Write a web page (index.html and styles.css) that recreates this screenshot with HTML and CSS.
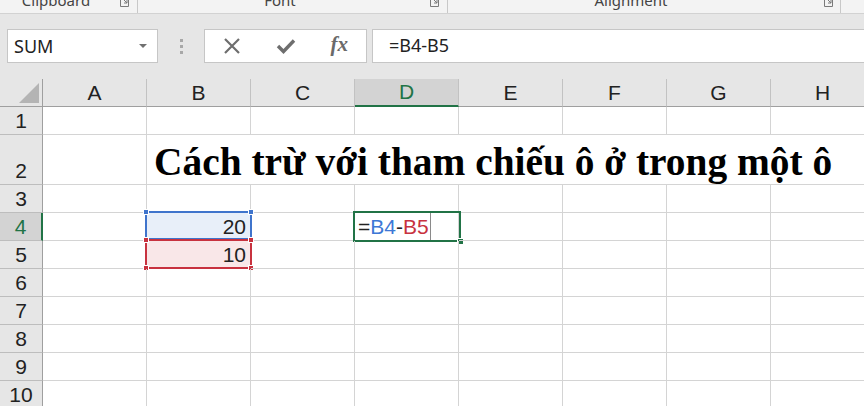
FILE: index.html
```html
<!DOCTYPE html>
<html lang="vi">
<head>
<meta charset="utf-8">
<title>Excel</title>
<link rel="stylesheet" href="styles.css">
</head>
<body>
<div class="ribbon">
  <div class="rgroup g1">
    <span class="rlabel">Clipboard</span>
    <span class="launch"><svg width="9" height="9" viewBox="0 0 9 9"><path d="M0.5 0 V8.5 H8.5 V0" fill="none" stroke="#7a7a7a" stroke-width="1"/><path d="M2 0 L7 5 M7 2 V5 H4" fill="none" stroke="#7a7a7a" stroke-width="1"/></svg></span>
  </div>
  <div class="rgroup g2">
    <span class="rlabel">Font</span>
    <span class="launch"><svg width="9" height="9" viewBox="0 0 9 9"><path d="M0.5 0 V8.5 H8.5 V0" fill="none" stroke="#7a7a7a" stroke-width="1"/><path d="M2 0 L7 5 M7 2 V5 H4" fill="none" stroke="#7a7a7a" stroke-width="1"/></svg></span>
  </div>
  <div class="rgroup g3">
    <span class="rlabel">Alignment</span>
    <span class="launch"><svg width="9" height="9" viewBox="0 0 9 9"><path d="M0.5 0 V8.5 H8.5 V0" fill="none" stroke="#7a7a7a" stroke-width="1"/><path d="M2 0 L7 5 M7 2 V5 H4" fill="none" stroke="#7a7a7a" stroke-width="1"/></svg></span>
  </div>
</div>

<div class="fbar">
  <div class="namebox">
    <span class="nbtext">SUM</span>
    <span class="dd"></span>
  </div>
  <div class="grip"><i></i><i></i><i></i></div>
  <div class="fbtns">
    <span class="fbtn"><svg width="18" height="18" viewBox="0 0 18 18"><path d="M2 2 L16 16 M16 2 L2 16" stroke="#6e6e6e" stroke-width="2.2" fill="none"/></svg></span>
    <span class="fbtn"><svg width="20" height="18" viewBox="0 0 20 18"><path d="M2 9 L7.5 14.5 L18 3.5" stroke="#6e6e6e" stroke-width="3.4" fill="none"/></svg></span>
    <span class="fbtn fx">fx</span>
  </div>
  <div class="finput">=B4-B5</div>
</div>

<div class="sheet">
  <div class="corner"><span class="tri"></span></div>
  <div class="ch">A</div>
  <div class="ch">B</div>
  <div class="ch">C</div>
  <div class="ch ch-sel">D</div>
  <div class="ch">E</div>
  <div class="ch">F</div>
  <div class="ch">G</div>
  <div class="ch">H</div>

  <div class="rh">1</div>
  <div class="c"></div><div class="c"></div><div class="c"></div><div class="c"></div><div class="c"></div><div class="c"></div><div class="c"></div><div class="c"></div>

  <div class="rh">2</div>
  <div class="c"></div>
  <div class="c title">Cách trừ với tham chiếu ô ở trong một ô</div>

  <div class="rh">3</div>
  <div class="c"></div><div class="c"></div><div class="c"></div><div class="c"></div><div class="c"></div><div class="c"></div><div class="c"></div><div class="c"></div>

  <div class="rh rh-sel">4</div>
  <div class="c"></div>
  <div class="c num ref-b">20<span class="refbox blue"><i class="h tl"></i><i class="h tr"></i></span></div>
  <div class="c"></div>
  <div class="c edit">=<span class="t-blue">B4</span>-<span class="t-red">B5</span><span class="caret"></span><span class="selbox"><i class="fill"></i></span></div>
  <div class="c"></div><div class="c"></div><div class="c"></div><div class="c"></div>

  <div class="rh">5</div>
  <div class="c"></div>
  <div class="c num ref-r">10<span class="refbox red"><i class="h tl"></i><i class="h tr"></i><i class="h bl"></i><i class="h br"></i></span></div>
  <div class="c"></div><div class="c"></div><div class="c"></div><div class="c"></div><div class="c"></div><div class="c"></div>

  <div class="rh">6</div>
  <div class="c"></div><div class="c"></div><div class="c"></div><div class="c"></div><div class="c"></div><div class="c"></div><div class="c"></div><div class="c"></div>
  <div class="rh">7</div>
  <div class="c"></div><div class="c"></div><div class="c"></div><div class="c"></div><div class="c"></div><div class="c"></div><div class="c"></div><div class="c"></div>
  <div class="rh">8</div>
  <div class="c"></div><div class="c"></div><div class="c"></div><div class="c"></div><div class="c"></div><div class="c"></div><div class="c"></div><div class="c"></div>
  <div class="rh">9</div>
  <div class="c"></div><div class="c"></div><div class="c"></div><div class="c"></div><div class="c"></div><div class="c"></div><div class="c"></div><div class="c"></div>
  <div class="rh">10</div>
  <div class="c"></div><div class="c"></div><div class="c"></div><div class="c"></div><div class="c"></div><div class="c"></div><div class="c"></div><div class="c"></div>
</div>
</body>
</html>
```

FILE: styles.css
```css
* { box-sizing: border-box; }
html, body { margin: 0; padding: 0; }
body {
  width: 864px;
  height: 406px;
  overflow: hidden;
  background: #e6e6e6;
  font-family: "Noto Sans", "Liberation Sans", sans-serif;
}

/* ribbon strip */
.ribbon {
  display: flex;
  height: 14px;
  background: #f3f3f3;
  border-bottom: 1px solid #d2d2d2;
  overflow: hidden;
}
.rgroup {
  display: flex;
  align-items: flex-start;
  height: 13px;
  border-right: 1px solid #c8c8c8;
}
.g1 { width: 138px; }
.g2 { width: 310px; }
.g3 { width: 393px; }
.rlabel {
  font-size: 15px;
  line-height: 15px;
  margin-top: -7px;
  color: #444;
  text-align: center;
}
.g1 .rlabel { width: 112px; }
.g2 .rlabel { width: 284px; }
.g3 .rlabel { width: 366px; }
.launch { display: block; margin-top: -2px; line-height: 0; }
.g1 .launch { margin-left: 8px; }
.g2 .launch { margin-left: 8px; }
.g3 .launch { margin-left: 10px; }

/* formula bar */
.fbar {
  display: flex;
  padding: 15px 0 16px 7px;
  height: 65px;
}
.namebox {
  width: 151px;
  height: 34px;
  background: #fff;
  border: 1px solid #c6c6c6;
  display: flex;
  align-items: center;
  padding-left: 6px;
}
.nbtext { font-size: 18px; color: #222; flex: 1; }
.dd {
  width: 0; height: 0;
  border-left: 4px solid transparent;
  border-right: 4px solid transparent;
  border-top: 4px solid #707070;
  margin-right: 10px;
}
.grip {
  width: 46px;
  display: flex;
  flex-direction: column;
  align-items: center;
  justify-content: center;
  gap: 3px;
}
.grip i { display: block; width: 3px; height: 3px; background: #a8a8a8; }
.fbtns {
  width: 163px;
  height: 34px;
  background: #fff;
  border: 1px solid #c6c6c6;
  display: flex;
  align-items: center;
  padding-left: 0;
}
.fbtn {
  width: 54px;
  display: flex;
  justify-content: center;
  align-items: center;
  height: 32px;
}
.fx {
  font-family: "Liberation Serif", serif;
  font-style: italic;
  font-weight: bold;
  font-size: 21px;
  color: #6a6a6a;
  padding-bottom: 3px;
}
.finput {
  margin-left: 5px;
  flex: 1;
  height: 34px;
  background: #fff;
  border: 1px solid #c6c6c6;
  border-right: none;
  font-size: 18px;
  color: #222;
  padding-left: 16px;
  line-height: 31px;
}

/* sheet grid */
.sheet {
  display: grid;
  grid-template-columns: 43px repeat(8, 104px);
  grid-template-rows: 28px 28px 50px repeat(8, 28px);
  background: #fff;
  font-family: "Liberation Sans", Arial, sans-serif;
  font-size: 21px;
  color: #222;
}
.corner {
  background: #e6e6e6;
  border-right: 1px solid #9f9f9f;
  border-bottom: 1px solid #9f9f9f;
  position: relative;
}
.tri {
  position: absolute;
  left: 19px;
  top: 4px;
  width: 0; height: 0;
  border-left: 20px solid transparent;
  border-bottom: 20px solid #b4b4b4;
}
.ch {
  background: #e6e6e6;
  border-right: 1px solid #c2c2c2;
  border-bottom: 1px solid #9f9f9f;
  text-align: center;
  line-height: 27px;
}
.ch-sel {
  background: #d3d3d3;
  color: #217346;
  border-bottom: 2px solid #217346;
  line-height: 26px;
}
.rh {
  background: #e6e6e6;
  border-right: 1px solid #9f9f9f;
  border-bottom: 1px solid #bdbdbd;
  text-align: center;
  display: flex;
  align-items: flex-end;
  justify-content: center;
  line-height: 27px;
}
.rh-sel {
  background: #d3d3d3;
  color: #217346;
  border-right: 2px solid #217346;
}
.c {
  border-right: 1px solid #d4d4d4;
  border-bottom: 1px solid #d4d4d4;
  line-height: 27px;
  position: relative;
  white-space: nowrap;
}
.title {
  grid-column: 3 / span 7;
  border-right: none;
  font-family: "Liberation Serif", "Times New Roman", serif;
  font-weight: bold;
  font-size: 39.4px;
  line-height: 40px;
  color: #000;
  padding: 7px 0 0 7px;
  display: flex;
  align-items: flex-end;
  padding-bottom: 2px;
}
.num { text-align: right; padding-right: 4px; }
.ref-b { background: #e8eff9; }
.ref-r { background: #f9e7e8; }
.refbox {
  position: absolute;
  left: -2px;
  top: -2px;
  width: 107px;
  border: 2px solid;
}
.refbox.blue { border-color: #3f74cc; height: 29px; }
.refbox.red { border-color: #c8323f; height: 30px; }
.h {
  position: absolute;
  width: 6px;
  height: 6px;
  border: 1px solid #fff;
}
.blue .h { background: #3f74cc; }
.red .h { background: #c8323f; }
.h.tl { left: -4px; top: -4px; }
.h.tr { right: -4px; top: -4px; }
.h.bl { left: -4px; bottom: -4px; }
.h.br { right: -4px; bottom: -4px; }

.edit { padding-left: 3px; color: #222; }
.t-blue { color: #3d78d6; }
.t-red { color: #c8323f; }
.caret {
  display: inline-block;
  width: 1px;
  height: 27px;
  background: #8a8a8a;
  vertical-align: top;
  margin-left: 1px;
}
.selbox {
  position: absolute;
  left: -2px;
  top: -2px;
  width: 108px;
  height: 31px;
  border: 2px solid #217346;
}
.fill {
  position: absolute;
  right: -5px;
  bottom: -5px;
  width: 7px;
  height: 7px;
  background: #217346;
  border: 1px solid #fff;
}
```
